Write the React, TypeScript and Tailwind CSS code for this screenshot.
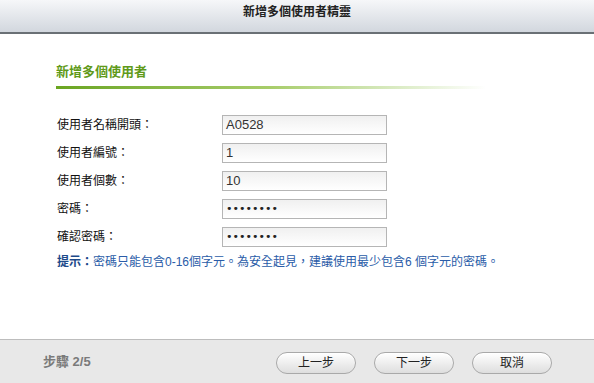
import React from "react";

const font = '"Liberation Sans", "Noto Sans CJK TC", sans-serif';

const rows: { label: string; value: string; pw?: boolean }[] = [
  { label: "使用者名稱開頭：", value: "A0528" },
  { label: "使用者編號：", value: "1" },
  { label: "使用者個數：", value: "10" },
  { label: "密碼：", value: "••••••••", pw: true },
  { label: "確認密碼：", value: "••••••••", pw: true },
];

function Btn({ children }: { children: React.ReactNode }) {
  return (
    <div className="w-[80px] h-[22px] rounded-full border border-[#a9a9a9] bg-gradient-to-b from-[#ffffff] to-[#dedede] flex items-center justify-center text-[12px] text-[#222] shadow-[inset_0_1px_0_#fff]">
      {children}
    </div>
  );
}

export default function App() {
  return (
    <div className="w-[594px] h-[383px] bg-white flex flex-col overflow-hidden" style={{ fontFamily: font }}>
      <div className="h-[34px] shrink-0 bg-gradient-to-b from-[#f6f7f9] to-[#d2d7de] border-b-2 border-[#6a7075] flex items-center justify-center">
        <span className="text-[12px] font-bold text-[#222] mt-[-9px]">新增多個使用者精靈</span>
      </div>
      <div className="flex-1 pl-[56px] pt-[29px]">
        <div className="text-[13px] font-bold text-[#5f9a1a] leading-[18px] h-[18px]">新增多個使用者</div>
        <div className="mt-[5px] h-[3px] w-[430px] bg-gradient-to-r from-[#6aa51f] via-[#a8cd6a] to-[#ffffff]"></div>
        <div className="mt-[26px] flex flex-col gap-[8px]">
          {rows.map((r) => (
            <div key={r.label} className="flex items-center h-[20px]">
              <div className="w-[166px] text-[12px] text-[#111] pl-[1px]">{r.label}</div>
              <div className="w-[165px] h-[20px] border border-[#b5b5b5] bg-gradient-to-b from-[#f0f0f0] to-[#ffffff] flex items-center pl-[3px]">
                <span className={r.pw ? "text-[11px] text-[#222] tracking-[0px]" : "text-[13px] text-[#333]"} style={{ fontFamily: r.pw ? '"DejaVu Sans", sans-serif' : '"Liberation Sans", sans-serif' }}>
                  {r.value}
                </span>
              </div>
            </div>
          ))}
        </div>
        <div className="mt-[6px] text-[12px] pl-[1px] whitespace-nowrap">
          <span className="font-bold text-[#1d4a8a]">提示：</span>
          <span className="text-[#2a5ca8]">密碼只能包含0-16個字元。為安全起見，建議使用最少包含6 個字元的密碼。</span>
        </div>
      </div>
      <div className="h-[44px] shrink-0 border-t border-[#bdbdbd] bg-[#e8e8e8] flex items-center">
        <div className="pl-[43px] w-[276px] text-[13px] font-bold text-[#7a7a7a]">步驟 2/5</div>
        <div className="flex gap-[18px] mt-[2px]">
          <Btn>上一步</Btn>
          <Btn>下一步</Btn>
          <Btn>取消</Btn>
        </div>
      </div>
    </div>
  );
}
